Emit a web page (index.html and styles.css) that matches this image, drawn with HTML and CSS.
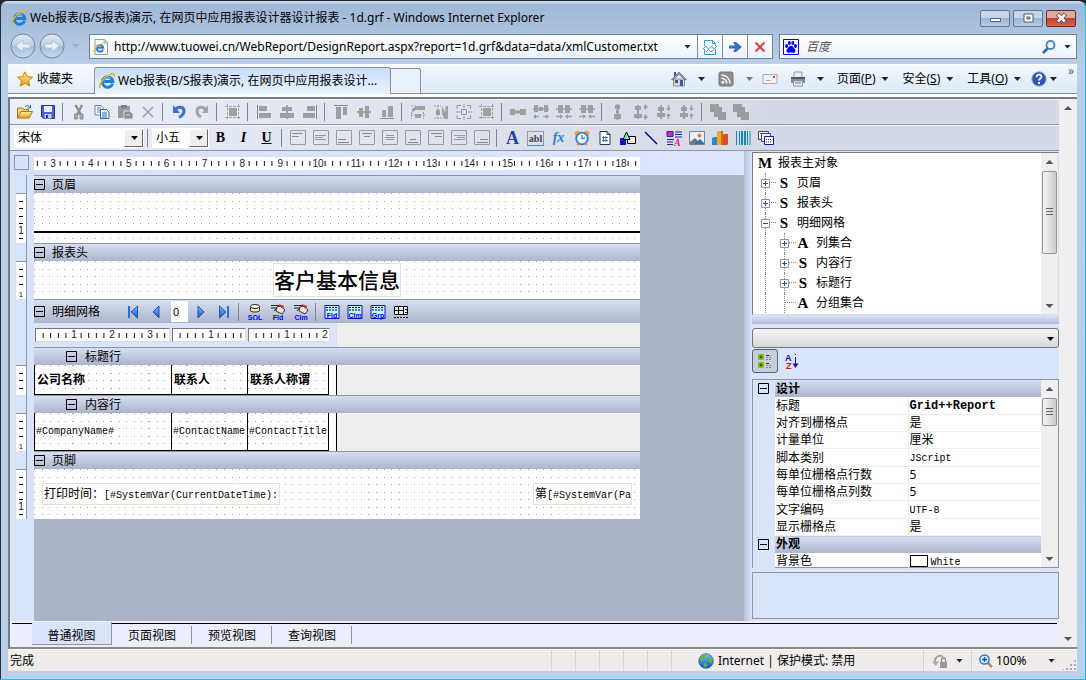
FILE: index.html
```html
<!DOCTYPE html>
<html lang="zh-CN">
<head>
<meta charset="utf-8">
<title>Web报表(B/S报表)演示</title>
<link rel="stylesheet" href="styles.css">
</head>
<body>
<svg class="defs" aria-hidden="true">
  <defs>
    <linearGradient id="gold" x2="0" y2="1"><stop stop-color="#fff3a0"/><stop offset="1" stop-color="#f09a10"/></linearGradient>
    <linearGradient id="blue" x2="0" y2="1"><stop stop-color="#7fc4f8"/><stop offset="1" stop-color="#1450c0"/></linearGradient>
    <linearGradient id="orb" x2="0" y2="1"><stop stop-color="#e2ecf5"/><stop offset=".48" stop-color="#bccfe1"/><stop offset=".5" stop-color="#a6bdd4"/><stop offset="1" stop-color="#c8dcee"/></linearGradient>
    <symbol id="ie" viewBox="0 0 16 16"><path d="M13.6 10.6A5.2 5.2 0 1 1 13.8 8.6H5.2" fill="none" stroke="#1f7fd6" stroke-width="3"/><path d="M4 7.4a4.7 4.7 0 0 1 8-2" fill="none" stroke="#7cc6f6"/><path d="M1.2 15C-1 12 5 4 11 1.400c3-1.300 5-.6 3.800 2.200" fill="none" stroke="#eeb01c" stroke-width="1.500"/></symbol>
    <symbol id="pageie" viewBox="0 0 16 16"><path d="M2 .5h9.500l3 3v12H2z" fill="#fff" stroke="#999"/><path d="M11 1v3h3.500" fill="#ddd" stroke="#aaa"/><path d="M10 10.600A3.300 3.300 0 1 1 10.200 8.800H4" fill="none" stroke="#1f7fd6" stroke-width="2"/><path d="M1 13C1 10 5 5 10 4.500" fill="none" stroke="#eeb01c" stroke-width="1.200"/></symbol>
    <symbol id="star" viewBox="0 0 16 16"><path d="M8 .8l2.200 4.800 5.300.6-3.900 3.600 1 5.200L8 12.400 3.400 15l1-5.200L.5 6.200l5.300-.6z" fill="url(#gold)" stroke="#c87f12"/></symbol>
    <symbol id="compat" viewBox="0 0 16 16"><path d="M2.500 7V1.500h8l3 3V7M2.500 10v5.500h11V10M10.500 1.500v3h3" fill="#fff" stroke="#3a9cc8"/><path d="M1 10l3-3 2.500 3 3-3 2.500 3 3-3M4 13l2.500-2.500L9 13l3-2.500" fill="none" stroke="#3a9cc8"/></symbol>
    <symbol id="go" viewBox="0 0 16 16"><path d="M2 6.500h6L6 3h3l6 5-6 5H6l2-3.500H2z" fill="#2f74bd"/></symbol>
    <symbol id="stop" viewBox="0 0 16 16"><path d="M3.500 3.500l9 9m0-9l-9 9" stroke="#d0494c" stroke-width="2.200"/></symbol>
    <symbol id="paw" viewBox="0 0 16 16"><path d="M.5.5h15v15H.5z" fill="#fff" stroke="#00f"/><g fill="#00f"><ellipse cx="3.600" cy="7" rx="1.500" ry="2"/><ellipse cx="6.300" cy="4" rx="1.500" ry="2"/><ellipse cx="9.800" cy="4" rx="1.500" ry="2"/><ellipse cx="12.500" cy="7" rx="1.500" ry="2"/><path d="M8 6.800c2 0 2.500 2 4 3.500 1.500 2-.5 4-2.200 3.500-1.200-.3-2.400-.3-3.600 0C4.500 14.300 2.500 12.300 4 10.300 5.500 8.800 6 6.800 8 6.800z"/></g></symbol>
    <symbol id="mag" viewBox="0 0 16 16"><path d="M7 9l-5 5" stroke="#2c68ae" stroke-width="2.600"/><circle cx="9.500" cy="6" r="4" fill="#fff" stroke="#3b83ca" stroke-width="1.800"/></symbol>
    <symbol id="home" viewBox="0 0 16 16"><path d="M2.500 8h11v7h-11z" fill="#d4d8dc" stroke="#8a9098"/><path d="M8 1l7.500 7.500-1.500.5-6-5.500L2 9 .5 8.500z" fill="#8c9aa8" stroke="#506070" stroke-width=".6"/><path d="M3 1h2v3L3 6z" fill="#3d4fc8"/><path d="M9 9h3v6H9z" fill="#2f62a8"/><path d="M4 9h3v3H4z" fill="#557"/></symbol>
    <symbol id="rss" viewBox="0 0 16 16"><rect x="1" y="1" width="14" height="14" rx="2" fill="#8d8d8d" stroke="#777"/><circle cx="4.800" cy="11.300" r="1.400" fill="#fff"/><path d="M3.500 7.200a5.300 5.300 0 0 1 5.300 5.300M3.500 4a8.500 8.500 0 0 1 8.500 8.500" fill="none" stroke="#fff" stroke-width="1.500"/></symbol>
    <symbol id="mail" viewBox="0 0 16 16"><path d="M1 3.500h14v9H1z" fill="#f4f4f4" stroke="#aaa"/><path d="M11 5h2v2h-2z" fill="#d33"/><path d="M4 9.500h5" stroke="#aaa"/></symbol>
    <symbol id="printer" viewBox="0 0 16 16"><path d="M4 6V1h8v5" fill="#eee" stroke="#999"/><path d="M1 6h14v6H1z" fill="#8b8f96"/><path d="M1 6h14v2H1z" fill="#55585e"/><path d="M3.500 10h9v5h-9z" fill="#e8eef4" stroke="#999"/><path d="M5 12h6" stroke="#2a8fd0"/></symbol>
    <symbol id="help" viewBox="0 0 16 16"><circle cx="8" cy="8" r="7.300" fill="#2c56b4" stroke="#aebfd8"/><path d="M5.500 6.200c0-3.400 5-3.300 5-.4C10.500 7.500 8 7.500 8 9.600" fill="none" stroke="#fff" stroke-width="1.800"/><path d="M7 11h2v2H7z" fill="#fff"/></symbol>
    <symbol id="globe" viewBox="0 0 16 16"><circle cx="8" cy="8" r="7.300" fill="url(#blue)" stroke="#2a5f9e" stroke-width=".8"/><path d="M2 5c3-4 5-4 6-3S6 5 5 7 2 9 2 5zM9 4c2-1 5 0 5.500 4-1 3-3 2-3.500 0S8 6 9 4zM6 10c3 0 4 2 2 4.500-2-.5-3-2-2-4.500z" fill="#5bb848"/></symbol>
    <symbol id="zoomin" viewBox="0 0 16 16"><path d="M9 9l5 5" stroke="#b0905e" stroke-width="2.500"/><circle cx="6.500" cy="6.500" r="4.600" fill="#dff0ff" stroke="#2d7cc8" stroke-width="1.500"/><path d="M4 6.500h5M6.500 4v5" stroke="#1456b0" stroke-width="1.500"/></symbol>
    <symbol id="protect" viewBox="0 0 16 16"><path d="M4 11A5 5 0 0 1 11 4" fill="none" stroke="#a4a4a4" stroke-width="2"/><path d="M0 9l7-1-3 5z" fill="#aaa"/><path d="M8 9h7v6H8z" fill="#999"/><path d="M9.500 9V6.500c0-2 4-2 4 0V9" fill="none" stroke="#888" stroke-width="1.300"/></symbol>

    <symbol id="open" viewBox="0 0 16 16"><path d="M.5 14V4h5l1 1.500h5V8" fill="#f5d67b" stroke="#a07820"/><path d="M.5 14L4 7.500h11.500L12 14z" fill="url(#gold)" stroke="#a07820"/><path d="M8 3c2-2 4-1.500 5 .5m.5-2.500v3h-3" fill="none" stroke="#3f5f95"/></symbol>
    <symbol id="save" viewBox="0 0 16 16"><path d="M1.500 1.500h13v13h-11l-2-2z" fill="#4e63cf" stroke="#28358e"/><path d="M4 2h8v6H4z" fill="#e7eefc"/><path d="M4.500 10h7v4.500h-7z" fill="#c6cce2"/><path d="M6 11h2v3H6z" fill="#28358e"/></symbol>
    <symbol id="cut" viewBox="0 0 16 16"><path d="M4.500 1L10 11M11 1L6 11" stroke="#909090" stroke-width="2.500"/><path d="M3.500 10h3v5h-3zM9 10h3v5H9z" fill="#aaa" stroke="#909090"/></symbol>
    <symbol id="copy" viewBox="0 0 16 16"><path d="M1 1.500h6l2 2V11H1z" fill="#fff" stroke="#5581ba"/><path d="M3 4h4M3 6h4M3 8h4" stroke="#5581ba"/><path d="M6.500 5.500h6l2.500 2.500v6.500H6.500z" fill="#eaf3ff" stroke="#326ab4"/><path d="M8 9h5M8 11h5M8 13h5" stroke="#326ab4"/></symbol>
    <symbol id="paste" viewBox="0 0 16 16"><path d="M1 2h12v12H1z" fill="#9a9a9a"/><path d="M4 1h6v3H4z" fill="#808080"/><path d="M7 7h6l3 3v5H7z" fill="#8c8c8c" stroke="#dcdfe8"/><path d="M9 11h4" stroke="#dcdfe8"/></symbol>
    <symbol id="del" viewBox="0 0 16 16"><path d="M3 3l10 10M13 3L3 13" stroke="#999" stroke-width="1.400"/></symbol>
    <symbol id="undo" viewBox="0 0 16 16"><path d="M4 6c3-4 9-3.500 9 1 0 3-2 5-5 6.500" fill="none" stroke="#3c6fc8" stroke-width="3"/><path d="M2 1v8h7z" fill="#3c6fc8"/></symbol>
    <symbol id="redo" viewBox="0 0 16 16"><path d="M12 6C9 2 3 2.500 3 7c0 3 2 5 4 6" fill="none" stroke="#a3a3a3" stroke-width="3"/><path d="M14 1v8H8z" fill="#a3a3a3"/></symbol>
    <symbol id="frame" viewBox="0 0 16 16"><path d="M4 4h8v8H4z" fill="#a0a0a0"/><path d="M2.500 0v16M13.500 0v16M0 2.500h16M0 13.500h16" stroke="#a0a0a0" stroke-dasharray="3 1"/></symbol>
    <symbol id="al" viewBox="0 0 16 16"><path d="M1.500 1v14" stroke="#888"/><path d="M3 2h8v5H3zM3 9h12v5H3z" fill="#9f9f9f"/></symbol>
    <symbol id="ac" viewBox="0 0 16 16"><path d="M8 1v14" stroke="#9f9f9f" stroke-width="2"/><path d="M3 3h10v4H3zM1 9h14v5H1z" fill="#9f9f9f"/></symbol>
    <symbol id="ar" viewBox="0 0 16 16"><path d="M14.500 1v14" stroke="#888"/><path d="M5 2h8v5H5zM1 9h12v5H1z" fill="#9f9f9f"/></symbol>
    <symbol id="at" viewBox="0 0 16 16"><path d="M1 1.500h14" stroke="#888"/><path d="M3 3h5v12H3zM10 3h4v8h-4z" fill="#9f9f9f"/></symbol>
    <symbol id="am" viewBox="0 0 16 16"><path d="M1 8h14" stroke="#9f9f9f" stroke-width="2"/><path d="M3 4h4v9H3zM9 2h4v12H9z" fill="#9f9f9f"/></symbol>
    <symbol id="ab" viewBox="0 0 16 16"><path d="M1 14.500h14" stroke="#888"/><path d="M3 6h4v7H3zM9 2h5v11H9z" fill="#9f9f9f"/></symbol>
    <symbol id="sw" viewBox="0 0 16 16"><path d="M2 5c4-4 8-3 13-3v4H6L2 8zM5 10h6v4H5z" fill="#9f9f9f"/><path d="M1.500 8v7m12-7v7M1 2h5m-5 9h14" stroke="#9f9f9f" stroke-dasharray="2 1"/></symbol>
    <symbol id="sh" viewBox="0 0 16 16"><path d="M9 2l3 6 1-6h2v13h-4L9 9zM3 6h4v5H3z" fill="#9f9f9f"/><path d="M1 2h7M1 14h8M5 1v14" stroke="#9f9f9f" stroke-dasharray="2 1"/></symbol>
    <symbol id="sb" viewBox="0 0 16 16"><path d="M5.500 5.500h5v5h-5z" fill="none" stroke="#999"/><path d="M1 5V1.500h4M11 1.500h3.500V5M14.500 11v3.500H11M5 14.500H1V11" fill="none" stroke="#999"/><path d="M8 0v4M8 12v4M0 8h4M12 8h4" stroke="#999"/></symbol>
    <symbol id="hs" viewBox="0 0 16 16"><path d="M0 5h5v6H0zM10 5h6v6h-6z" fill="#9f9f9f"/><path d="M5 8h5" stroke="#9f9f9f" stroke-width="3"/></symbol>
    <symbol id="hs2" viewBox="0 0 16 16"><path d="M1 1h4v7H1zM11 1h4v7h-4zM6 3h4v4H6z" fill="#9f9f9f"/><path d="M0 5h16M1 12.500h5m4 0h5" stroke="#9f9f9f" stroke-width="1.500"/><path d="M0 12.500L3 10v5zM16 12.500L13 10v5z" fill="#9f9f9f"/></symbol>
    <symbol id="hs3" viewBox="0 0 16 16"><path d="M2 1h5v8H2zM9 1h5v8H9z" fill="#9f9f9f"/><path d="M0 5h16M0 12.500h5m6 0h5" stroke="#9f9f9f" stroke-width="1.500"/><path d="M7 12.500L4 10v5zM9 12.500l3-2.500v5z" fill="#9f9f9f"/></symbol>
    <symbol id="vs" viewBox="0 0 16 16"><path d="M5 1h5v4H5zM4 10h7v5H4zM6 6h3v3H6z" fill="#9f9f9f"/><path d="M7.500 0v16" stroke="#9f9f9f" stroke-width="2"/></symbol>
    <symbol id="vs2" viewBox="0 0 16 16"><path d="M2 2h6v4H2zM1 10h8v4H1zM4 1h2v14H4z" fill="#9f9f9f"/><path d="M12.500 1v5m0 4v5" stroke="#9f9f9f" stroke-width="1.500"/><path d="M12.500 0L15 4h-5zM12.500 16L15 12h-5z" fill="#9f9f9f"/></symbol>
    <symbol id="vs3" viewBox="0 0 16 16"><path d="M2 3h6v4H2zM1 9h8v4H1zM4 1h2v14H4z" fill="#9f9f9f"/><path d="M12.500 1v5m0 4v5" stroke="#9f9f9f" stroke-width="1.500"/><path d="M12.500 7L15 4h-5zM12.500 9L15 12h-5z" fill="#9f9f9f"/></symbol>
    <symbol id="steps" viewBox="0 0 16 16"><path d="M0 0h9v3h3v5h4v8H8v-3H4V8H0z" fill="#9c9c9c"/></symbol>

    <symbol id="box" viewBox="0 0 16 16"><path d="M.5.5h15v14H.5z" fill="none" stroke="#9a9a9a"/></symbol>
    <symbol id="tl" viewBox="0 0 16 16"><use href="#box"/><path d="M2 3.500h11M2 6.500h7" stroke="#888"/></symbol>
    <symbol id="ml" viewBox="0 0 16 16"><use href="#box"/><path d="M2 5.500h11M2 7.500h8M2 9.500h11" stroke="#999"/></symbol>
    <symbol id="bl" viewBox="0 0 16 16"><use href="#box"/><path d="M2 9.500h8M2 12.500h11" stroke="#888"/></symbol>
    <symbol id="tc" viewBox="0 0 16 16"><use href="#box"/><path d="M3 3.500h10M5 6.500h6" stroke="#888"/></symbol>
    <symbol id="mc" viewBox="0 0 16 16"><use href="#box"/><path d="M4 5.500h8M3 7.500h10M4 9.500h8" stroke="#999"/></symbol>
    <symbol id="bc" viewBox="0 0 16 16"><use href="#box"/><path d="M5 9.500h6M3 12.500h10" stroke="#888"/></symbol>
    <symbol id="tr" viewBox="0 0 16 16"><use href="#box"/><path d="M3 3.500h11M7 6.500h7" stroke="#888"/></symbol>
    <symbol id="mr" viewBox="0 0 16 16"><use href="#box"/><path d="M3 5.500h11M6 7.500h8M3 9.500h11" stroke="#999"/></symbol>
    <symbol id="br" viewBox="0 0 16 16"><use href="#box"/><path d="M6 9.500h8M3 12.500h11" stroke="#888"/></symbol>
    <symbol id="clock" viewBox="0 0 16 16"><circle cx="3.500" cy="3.500" r="2.800" fill="#f4a51d"/><circle cx="12.500" cy="3.500" r="2.800" fill="#f4a51d"/><circle cx="8" cy="8.500" r="5.800" fill="#e9f6ff" stroke="#2a7ed0" stroke-width="1.800"/><path d="M8 5v4l3-1.500" fill="none" stroke="#2a5ea0"/><path d="M3 15l2-2m8 2l-2-2" stroke="#e08a18" stroke-width="2"/></symbol>
    <symbol id="shapes" viewBox="0 0 16 16"><path d="M7.500 6.500h8v7h-8z" fill="#eee" stroke="#000"/><path d="M0 8h6v7H0z" fill="#1a10c8"/><path d="M6.500 2L10 9.500H3z" fill="#7ee8b0" stroke="#000"/></symbol>
    <symbol id="line" viewBox="0 0 16 16"><path d="M2 2l12 12" stroke="#00008b" stroke-width="1.400"/></symbol>
    <symbol id="pic" viewBox="0 0 16 16"><path d="M.5 1.500h15v13H.5z" fill="#e7f2ff" stroke="#6f87a4"/><path d="M1 12l5-4 4 4v2H1z" fill="#777"/><path d="M5 14l6-5 4 4v1z" fill="#3472b8"/><circle cx="10.500" cy="5.500" r="2" fill="#f08030"/></symbol>
    <symbol id="chart" viewBox="0 0 16 16"><path d="M0 8l2-1h3v8H0z" fill="#2f86d0"/><path d="M5 2l2-1h4v14H5z" fill="#f2a818"/><path d="M9 1h2v14H9z" fill="#c07808"/><path d="M11 5l1-1h4v10l-1 1h-4z" fill="#e0482a"/></symbol>
    <symbol id="bars" viewBox="0 0 16 16"><path d="M1.500 1v14M4.500 1v14M12.500 1v14M15 1v14" stroke="#1689bd"/><path d="M7 1v14M10 1v14" stroke="#1689bd" stroke-width="2"/></symbol>
    <symbol id="pages" viewBox="0 0 16 16"><path d="M.5 1.500h10v8H.5z" fill="#eee" stroke="#446"/><path d="M3.500 3.500h9v8h-9z" fill="#eee" stroke="#446"/><path d="M6.500 6.500h9v8h-9z" fill="#fff" stroke="#1414b0"/><path d="M8 9.500h6M8 12h6" stroke="#1414b0" stroke-dasharray="1 1"/><path d="M2 3.500h8" stroke="#446" stroke-dasharray="1 1"/></symbol>
    <symbol id="subrep" viewBox="0 0 16 16"><path d="M1 1.500h6v5H1z" fill="#c32bd0" stroke="#402080"/><path d="M9 2h7M9 4.500h7M9 7h7M1 9.500h7M1 12h6M1 14.500h6" stroke="#2020a0"/><text x="8" y="16" font-family="Liberation Serif" font-size="10" font-style="italic" font-weight="bold" fill="#e01090">A</text></symbol>
    <symbol id="hash" viewBox="0 0 16 16"><path d="M3 1.500h7l3 3v10H3z" fill="#fff" stroke="#334"/><path d="M10 1.500v3h3" fill="none" stroke="#334"/><path d="M6.500 6v6M9 6v6M5 7.500h6M5 10.500h6" stroke="#4477bb"/></symbol>

    <symbol id="first" viewBox="0 0 16 16"><path d="M3 2h2v12H3z" fill="#2a6fd6"/><path d="M12.500 2v12L6 8z" fill="url(#blue)" stroke="#1a55b8"/></symbol>
    <symbol id="prev" viewBox="0 0 16 16"><path d="M11 2v12L5 8z" fill="url(#blue)" stroke="#1a55b8"/></symbol>
    <symbol id="next" viewBox="0 0 16 16"><path d="M5 2v12l6-6z" fill="url(#blue)" stroke="#1a55b8"/></symbol>
    <symbol id="last" viewBox="0 0 16 16"><path d="M11 2h2v12h-2z" fill="#2a6fd6"/><path d="M3.500 2v12L10 8z" fill="url(#blue)" stroke="#1a55b8"/></symbol>
    <symbol id="sql" viewBox="0 0 16 16"><path d="M3.500 2.500v4c0 2 9 2 9 0v-4" fill="#f6f090" stroke="#222"/><ellipse cx="8" cy="2.500" rx="4.500" ry="2" fill="#fff" stroke="#222"/></symbol>
    <symbol id="hand" viewBox="0 0 16 16"><path d="M1 1.500h8M1 4h7M4 7L9 2" stroke="#222"/><path d="M7 3l3-1 5 4-3 4-6-3z" fill="#f4e4dc" stroke="#333"/><path d="M9 1l5 2" stroke="#d02020" stroke-width="1.500"/></symbol>
    <symbol id="grid" viewBox="0 0 16 16"><path d="M1 1.500h14v13H1z" fill="#bff3f8" stroke="#1010c0"/><path d="M2 3.500h12M2 6h12" stroke="#000" stroke-dasharray="2 1"/></symbol>
    <symbol id="gridlast" viewBox="0 0 16 16"><path d="M1.500 2.500h13v8h-13z" fill="#e8ecf4" stroke="#000"/><path d="M2 6.500h9M5.500 3v7M10.500 3v7" stroke="#000"/><path d="M12 5.500h2M12 8.500h2M1 13.500h14" stroke="#000" stroke-dasharray="2 1"/></symbol>
    <symbol id="minus" viewBox="0 0 11 11"><path d="M.5.5h10v10H.5zM2 5.500h7" fill="none" stroke="#000"/></symbol>
    <symbol id="tplus" viewBox="0 0 9 9"><path d="M.5.5h8v8h-8z" fill="#fff" stroke="#8a96a4"/><path d="M2 4.500h5M4.500 2v5" stroke="#2f4f9c"/></symbol>
    <symbol id="tminus" viewBox="0 0 9 9"><path d="M.5.5h8v8h-8z" fill="#fff" stroke="#8a96a4"/><path d="M2 4.500h5" stroke="#2f4f9c"/></symbol>
    <symbol id="cat" viewBox="0 0 16 16"><path d="M1 1h6v6H1zM1 9h6v6H1z" fill="#8cc010"/><path d="M2.500 4h3M4 2.500v3M2.500 12h3M4 10.500v3" stroke="#222"/><path d="M9 2.500h3M9 10.500h3" stroke="#222"/><path d="M9 4.500h6M9 6.500h6M9 12.500h6M9 14.500h6M14 2v1" stroke="#888" stroke-dasharray="2 1"/></symbol>
    <symbol id="az" viewBox="0 0 16 16"><text x="1" y="8" font-family="Liberation Sans" font-size="9" font-weight="bold" fill="#1010a8">A</text><text x="2" y="16" font-family="Liberation Sans" font-size="9" font-weight="bold" fill="#d01020">Z</text><path d="M11.500 1v1m0 2v8" stroke="#1010a8"/><path d="M8.500 10.500h6l-3 4.500z" fill="#1010a8"/></symbol>
  </defs>
</svg>

<div class="window">
  <header class="titlebar">
    <svg class="i"><use href="#ie"/></svg>
    <h1 class="title">Web报表(B/S报表)演示, 在网页中应用报表设计器设计报表 - 1d.grf - Windows Internet Explorer</h1>
    <div class="winbtns">
      <button class="winbtn" aria-label="最小化"><svg class="w"><path d="M1.500 6.500h10v3h-10z" fill="#fff" stroke="#555d68"/></svg></button>
      <button class="winbtn" aria-label="还原"><svg class="w"><path d="M2 2h9v8H2z" fill="#fff" stroke="#555d68"/><path d="M5 5h3v2H5z" fill="#a9c0da" stroke="#555d68"/></svg></button>
      <button class="winbtn close" aria-label="关闭"><svg class="w"><path d="M2.500 2l8 8m0-8l-8 8" stroke="#60484c" stroke-width="4.500"/><path d="M3 2.500l7 7m0-7l-7 7" stroke="#fff" stroke-width="2.600"/></svg></button>
    </div>
  </header>

  <div class="addressrow">
    <div class="nav">
      <button class="orb" aria-label="后退"><svg class="o" viewBox="0 0 26 26"><circle cx="13" cy="13" r="12" fill="url(#orb)" stroke="#6f87a0"/><path d="M6 13l7-6v4h7v4h-7v4z" fill="#e9f2fa" stroke="#b3c6d8"/></svg></button>
      <button class="orb" aria-label="前进"><svg class="o" viewBox="0 0 26 26"><circle cx="13" cy="13" r="12" fill="url(#orb)" stroke="#6f87a0"/><path d="M20 13l-7-6v4H6v4h7v4z" fill="#e9f2fa" stroke="#b3c6d8"/></svg></button>
      <span class="arrow pale"></span>
    </div>
    <div class="address">
      <svg class="i"><use href="#pageie"/></svg>
      <input class="url" aria-label="地址" value="http://www.tuowei.cn/WebReport/DesignReport.aspx?report=1d.grf&amp;data=data/xmlCustomer.txt">
      <span class="arrow drop"></span>
      <button class="abtn" aria-label="兼容性视图"><svg class="i"><use href="#compat"/></svg></button>
      <button class="abtn" aria-label="转到"><svg class="i"><use href="#go"/></svg></button>
      <button class="abtn" aria-label="停止"><svg class="i"><use href="#stop"/></svg></button>
    </div>
    <div class="search">
      <svg class="i"><use href="#paw"/></svg>
      <input class="query" aria-label="搜索" placeholder="百度">
      <svg class="i"><use href="#mag"/></svg>
      <span class="arrow"></span>
    </div>
  </div>

  <div class="commandbar">
    <button class="fav"><svg class="i"><use href="#star"/></svg>收藏夹</button>
    <button class="tab"><svg class="i"><use href="#ie"/></svg><span>Web报表(B/S报表)演示, 在网页中应用报表设计...</span></button>
    <button class="newtab" aria-label="新选项卡"></button>
    <nav class="commands">
      <button class="cmd"><svg class="i"><use href="#home"/></svg><span class="arrow"></span></button>
      <button class="cmd"><svg class="i"><use href="#rss"/></svg><span class="arrow grey"></span></button>
      <button class="cmd"><svg class="i"><use href="#mail"/></svg></button>
      <button class="cmd"><svg class="i"><use href="#printer"/></svg><span class="arrow"></span></button>
      <button class="cmd word"><span>页面(<u>P</u>)</span><span class="arrow"></span></button>
      <button class="cmd word"><span>安全(<u>S</u>)</span><span class="arrow"></span></button>
      <button class="cmd word"><span>工具(<u>O</u>)</span><span class="arrow"></span></button>
      <button class="cmd help"><svg class="i"><use href="#help"/></svg><span class="arrow"></span></button>
      <button class="more" aria-label="更多">»</button>
    </nav>
  </div>

  <div class="viewport">
    <main class="app">
      <div class="toolbar">
        <button class="tb"><svg class="i"><use href="#open"/></svg></button><button class="tb"><svg class="i"><use href="#save"/></svg></button><i class="sep"></i>
        <button class="tb"><svg class="i"><use href="#cut"/></svg></button><button class="tb"><svg class="i"><use href="#copy"/></svg></button><button class="tb"><svg class="i"><use href="#paste"/></svg></button><button class="tb"><svg class="i"><use href="#del"/></svg></button><i class="sep"></i>
        <button class="tb"><svg class="i"><use href="#undo"/></svg></button><button class="tb"><svg class="i"><use href="#redo"/></svg></button><i class="sep"></i>
        <button class="tb"><svg class="i"><use href="#frame"/></svg></button><i class="sep"></i>
        <button class="tb"><svg class="i"><use href="#al"/></svg></button><button class="tb"><svg class="i"><use href="#ac"/></svg></button><button class="tb"><svg class="i"><use href="#ar"/></svg></button><i class="sep"></i>
        <button class="tb"><svg class="i"><use href="#at"/></svg></button><button class="tb"><svg class="i"><use href="#am"/></svg></button><button class="tb"><svg class="i"><use href="#ab"/></svg></button><i class="sep"></i>
        <button class="tb"><svg class="i"><use href="#sw"/></svg></button><button class="tb"><svg class="i"><use href="#sh"/></svg></button><button class="tb"><svg class="i"><use href="#sb"/></svg></button><button class="tb"><svg class="i"><use href="#frame"/></svg></button><i class="sep"></i>
        <button class="tb"><svg class="i"><use href="#hs"/></svg></button><button class="tb"><svg class="i"><use href="#hs2"/></svg></button><button class="tb"><svg class="i"><use href="#hs3"/></svg></button><button class="tb"><svg class="i"><use href="#hs3"/></svg></button><i class="sep"></i>
        <button class="tb"><svg class="i"><use href="#vs"/></svg></button><button class="tb"><svg class="i"><use href="#vs2"/></svg></button><button class="tb"><svg class="i"><use href="#vs3"/></svg></button><button class="tb"><svg class="i"><use href="#vs3"/></svg></button><i class="sep"></i>
        <button class="tb"><svg class="i"><use href="#steps"/></svg></button><button class="tb"><svg class="i"><use href="#steps"/></svg></button>
      </div>
      <div class="toolbar">
        <span class="combo family"><select aria-label="字体"><option>宋体</option></select></span><i class="sep"></i>
        <span class="combo size"><select aria-label="字号"><option>小五</option></select></span>
        <button class="tb letter"><b>B</b></button><button class="tb letter"><i>I</i></button><button class="tb letter"><u>U</u></button><i class="sep"></i>
        <button class="tb"><svg class="i"><use href="#tl"/></svg></button><button class="tb"><svg class="i"><use href="#ml"/></svg></button><button class="tb"><svg class="i"><use href="#bl"/></svg></button><button class="tb"><svg class="i"><use href="#tc"/></svg></button><button class="tb"><svg class="i"><use href="#mc"/></svg></button><button class="tb"><svg class="i"><use href="#bc"/></svg></button><button class="tb"><svg class="i"><use href="#tr"/></svg></button><button class="tb"><svg class="i"><use href="#mr"/></svg></button><button class="tb"><svg class="i"><use href="#br"/></svg></button><i class="sep"></i>
        <button class="tb label-a">A</button><button class="tb"><span class="abl">abl</span></button><button class="tb fx">fx</button>
        <button class="tb"><svg class="i"><use href="#clock"/></svg></button><button class="tb"><svg class="i"><use href="#hash"/></svg></button><button class="tb"><svg class="i"><use href="#shapes"/></svg></button><button class="tb"><svg class="i"><use href="#line"/></svg></button><button class="tb"><svg class="i"><use href="#subrep"/></svg></button><button class="tb"><svg class="i"><use href="#pic"/></svg></button><button class="tb"><svg class="i"><use href="#chart"/></svg></button><button class="tb"><svg class="i"><use href="#bars"/></svg></button><button class="tb"><svg class="i"><use href="#pages"/></svg></button>
      </div>

      <div class="work">
        <section class="designer">
          <div class="rulerrow">
            <span class="corner"></span>
            <div class="ruler"><span><b>3</b></span><span><b>4</b></span><span><b>5</b></span><span><b>6</b></span><span><b>7</b></span><span><b>8</b></span><span><b>9</b></span><span><b>10</b></span><span><b>11</b></span><span><b>12</b></span><span><b>13</b></span><span><b>14</b></span><span><b>15</b></span><span><b>16</b></span><span><b>17</b></span><span><b>18</b></span></div>
          </div>
          <div class="canvas">
            <div class="band">
              <div class="vruler"><span class="ticks page"><b>1</b></span></div>
              <div class="sheet">
                <div class="head"><svg class="m"><use href="#minus"/></svg>页眉</div>
                <div class="body dots page"><hr class="rule"></div>
              </div>
            </div>
            <div class="band">
              <div class="vruler"><span class="ticks"><b class="cutoff">1</b></span></div>
              <div class="sheet">
                <div class="head"><svg class="m"><use href="#minus"/></svg>报表头</div>
                <div class="body dots center"><span class="heading">客户基本信息</span></div>
              </div>
            </div>
            <div class="band">
              <div class="vruler tall"></div>
              <div class="sheet">
                <div class="head gridhead"><svg class="m"><use href="#minus"/></svg><span class="gridname">明细网格</span>
                  <button class="tb"><svg class="i"><use href="#first"/></svg></button><button class="tb"><svg class="i"><use href="#prev"/></svg></button>
                  <input class="recno" aria-label="记录号" value="0">
                  <button class="tb"><svg class="i"><use href="#next"/></svg></button><button class="tb"><svg class="i"><use href="#last"/></svg></button><i class="sep"></i>
                  <button class="tb"><svg class="i" viewBox="0 0 16 16"><use href="#sql"/><text class="tag" x="8" y="16">SQL</text></svg></button>
                  <button class="tb"><svg class="i" viewBox="0 0 16 16"><use href="#hand"/><text class="tag" x="8" y="16">Fld</text></svg></button>
                  <button class="tb"><svg class="i" viewBox="0 0 16 16"><use href="#hand"/><text class="tag" x="8" y="16">Clm</text></svg></button><i class="sep"></i>
                  <button class="tb"><svg class="i" viewBox="0 0 16 16"><use href="#grid"/><text class="tag" x="8" y="14">Fld</text></svg></button>
                  <button class="tb"><svg class="i" viewBox="0 0 16 16"><use href="#grid"/><text class="tag" x="8" y="14">Clm</text></svg></button>
                  <button class="tb"><svg class="i" viewBox="0 0 16 16"><use href="#grid"/><text class="tag" x="8" y="14">Grp</text></svg></button>
                  <button class="tb"><svg class="i"><use href="#gridlast"/></svg></button>
                </div>
                <div class="colrulers">
                  <div class="inner">
                    <div class="colruler c1"><span></span><span><b>1</b></span><span><b>2</b></span><span><b>3</b></span></div>
                    <div class="colruler c2"><span></span><span><b>1</b></span><span></span></div>
                    <div class="colruler c3"><span></span><span><b>1</b></span><span><b>2</b></span></div>
                  </div>
                </div>
              </div>
            </div>
            <div class="band">
              <div class="vruler"><span class="ticks"></span></div>
              <div class="sheet">
                <div class="head sub"><svg class="m"><use href="#minus"/></svg>标题行</div>
                <div class="gridbody">
                  <table class="detail titles dots"><tr><th class="c1">公司名称</th><th class="c2">联系人</th><th class="c3">联系人称谓</th></tr></table><span class="edge"></span>
                </div>
              </div>
            </div>
            <div class="band">
              <div class="vruler"><span class="ticks"><b class="cutoff">1</b></span></div>
              <div class="sheet">
                <div class="head sub"><svg class="m"><use href="#minus"/></svg>内容行</div>
                <div class="gridbody">
                  <table class="detail content dots"><tr><td class="c1">#CompanyName#</td><td class="c2">#ContactName</td><td class="c3">#ContactTitle</td></tr></table><span class="edge"></span>
                </div>
              </div>
            </div>
            <div class="band">
              <div class="vruler"><span class="ticks page"><b>1</b></span></div>
              <div class="sheet">
                <div class="head"><svg class="m"><use href="#minus"/></svg>页脚</div>
                <div class="body dots footer"><span class="field">打印时间：<code>[#SystemVar(CurrentDateTime):</code></span><span class="field short">第<code>[#SystemVar(Pa</code></span></div>
              </div>
            </div>
          </div>
        </section>

        <div class="splitter"></div>

        <aside class="side">
          <div class="tree">
            <ul class="nodes">
              <li class="root"><b class="kind">M</b>报表主对象</li>
              <li class="l1"><svg class="t"><use href="#tplus"/></svg><b class="kind">S</b>页眉</li>
              <li class="l1"><svg class="t"><use href="#tplus"/></svg><b class="kind">S</b>报表头</li>
              <li class="l1"><svg class="t"><use href="#tminus"/></svg><b class="kind">S</b>明细网格</li>
              <li class="l2"><svg class="t"><use href="#tplus"/></svg><b class="kind">A</b>列集合</li>
              <li class="l2"><svg class="t"><use href="#tplus"/></svg><b class="kind">S</b>内容行</li>
              <li class="l2"><svg class="t"><use href="#tplus"/></svg><b class="kind">S</b>标题行</li>
              <li class="l2"><span class="t"></span><b class="kind">A</b>分组集合</li>
            </ul>
            <div class="scroll"><span class="up"></span><span class="thumb long"></span><span class="down"></span></div>
          </div>
          <div class="hsplit"></div>
          <span class="combo wide"><select aria-label="对象"><option></option></select></span>
          <div class="sorts">
            <button class="sort on" aria-label="按分类"><svg class="i"><use href="#cat"/></svg></button>
            <button class="sort" aria-label="按字母"><svg class="i"><use href="#az"/></svg></button>
          </div>
          <div class="props">
            <table class="ptable">
              <tr class="group"><td class="gut"><svg class="m"><use href="#minus"/></svg></td><th colspan="2">设计</th></tr>
              <tr><td class="gut"></td><td class="name">标题</td><td><code><b>Grid++Report</b></code></td></tr>
              <tr><td class="gut"></td><td class="name">对齐到栅格点</td><td>是</td></tr>
              <tr><td class="gut"></td><td class="name">计量单位</td><td>厘米</td></tr>
              <tr><td class="gut"></td><td class="name">脚本类别</td><td><code>JScript</code></td></tr>
              <tr><td class="gut"></td><td class="name">每单位栅格点行数</td><td>5</td></tr>
              <tr><td class="gut"></td><td class="name">每单位栅格点列数</td><td>5</td></tr>
              <tr><td class="gut"></td><td class="name">文字编码</td><td><code>UTF-8</code></td></tr>
              <tr><td class="gut"></td><td class="name">显示栅格点</td><td>是</td></tr>
              <tr class="group"><td class="gut"><svg class="m"><use href="#minus"/></svg></td><th colspan="2">外观</th></tr>
              <tr><td class="gut"></td><td class="name">背景色</td><td><span class="swatch"></span><code>White</code></td></tr>
            </table>
            <div class="scroll"><span class="up"></span><span class="thumb"></span><span class="down"></span></div>
          </div>
          <div class="hint"></div>
        </aside>
      </div>

      <div class="views">
        <span class="lead"></span>
        <button class="view active">普通视图</button>
        <button class="view">页面视图</button>
        <button class="view">预览视图</button>
        <button class="view">查询视图</button>
        <span class="tail"></span>
      </div>
    </main>
    <div class="scroll pagescroll"><span class="up"></span><span class="down"></span></div>
  </div>

  <footer class="status">
    <span class="done">完成</span>
    <span class="cells"><i></i><i></i><i></i><i></i><i></i><i></i></span>
    <span class="zone"><svg class="i"><use href="#globe"/></svg>Internet | 保护模式: 禁用</span>
    <button class="prot" aria-label="保护"><svg class="i"><use href="#protect"/></svg><span class="arrow"></span></button>
    <button class="zoom"><svg class="i"><use href="#zoomin"/></svg><span class="pct">100%</span><span class="arrow"></span></button>
    <span class="grip"></span>
  </footer>
</div>
</body>
</html>
```
FILE: styles.css
```css
* { box-sizing: border-box; }
html, body { height: 100%; margin: 0; }
body {
  background: #20242c;
  color: #000;
  font: 12px/16px "Noto Sans", "Noto Sans CJK SC", sans-serif;
  overflow: hidden;
}
button {
  margin: 0; padding: 0; border: 0; background: none;
  color: inherit; font: inherit;
  display: flex; align-items: center; justify-content: center; flex: none;
}
input, select { font: inherit; color: inherit; border: 0; padding: 0; margin: 0; min-width: 0; outline: 0; }
.defs { position: absolute; width: 0; height: 0; }
.i { width: 16px; height: 16px; flex: none; display: block; }
.arrow {
  width: 7px; height: 4px; flex: none;
  background: #1c2430; clip-path: polygon(0 0, 100% 0, 50% 100%);
}
.arrow.pale { background: #9db3ca; }
.arrow.grey { background: #707a86; }

/* window frame */
.window {
  height: 100%; display: flex; flex-direction: column;
  padding: 0 8px 8px 7px; border: 1px solid #23303c; border-top-color: #20242c;
  border-right-color: #17c3de; border-bottom-color: #17c3de;
  border-radius: 7px 7px 0 0;
  background: linear-gradient(#d3e2f2 0, #9fb8d6 4px, #b8cde6 60px, #b9d0ea 100%);
}
.titlebar { display: flex; align-items: center; height: 32px; flex: none; padding: 2px 1px 0 3px; gap: 3px; }
.title { flex: 1; margin: 0; font-size: 12px; font-weight: 400; line-height: 18px; white-space: nowrap; overflow: hidden; }
.winbtns { display: flex; gap: 3px; }
.winbtn {
  width: 30px; height: 17px; border: 1px solid #5f738c; border-radius: 2px;
  background: linear-gradient(#c6d6e9 45%, #9fb6d0 50%, #b8cce2);
}
.winbtn.close { background: linear-gradient(#e2a9a0 45%, #c4432c 50%, #d3674c); border-color: #6d2a2a; }
.w { width: 13px; height: 12px; }

/* address row */
.addressrow { display: flex; align-items: flex-start; height: 31px; flex: none; gap: 6px; }
.nav { display: flex; align-items: center; gap: 3px; width: 75px; height: 26px; padding-left: 2px; }
.orb, .o { width: 26px; height: 26px; }
.nav .arrow { margin-left: 4px; }
.address, .search {
  display: flex; align-items: center; height: 25px; margin-top: 1px;
  border: 1px solid #6e8299; background: linear-gradient(#fff, #eaf2fb);
}
.address { flex: 1; padding-left: 3px; gap: 5px; }
.search { width: 298px; padding: 0 5px 0 3px; gap: 7px; }
.url { flex: 1; background: none; height: 20px; }
.drop { margin-right: 1px; }
.abtn { width: 25px; height: 23px; border-left: 1px solid #7d90a6; }
.abtn + .abtn { margin-left: -5px; }
.query { flex: 1; background: none; font-style: italic; height: 20px; }
.query::placeholder { color: #555; opacity: 1; }

/* command bar */
.commandbar {
  display: flex; align-items: stretch; height: 33px; flex: none; padding-bottom: 3px;
  background: linear-gradient(#fff 0 1px, #f2f8fe 1px, #dce9f7 29px, #8a9099 29px 30px, #fff 30px);
}
.fav { width: 86px; gap: 4px; padding-right: 12px; background: linear-gradient(#f8fbfe, #e4eef9 28px, transparent 29px); }
.tab {
  width: 297px; margin-top: 3px; padding: 0 4px; gap: 3px; justify-content: flex-start;
  border: 1px solid #8a9099; border-bottom: 0; border-radius: 3px 3px 0 0;
  background: linear-gradient(#c9defa, #e8f2fe); white-space: nowrap; overflow: hidden;
}
.newtab { width: 30px; margin-top: 4px; border: 1px solid #8a9099; border-left: 0; border-radius: 0 3px 0 0; background: #e9f2fb; }
.commands { margin-left: auto; display: flex; align-items: center; padding-right: 3px; }
.cmd { gap: 11px; margin-right: 13px; }
.cmd:nth-child(2) { margin-right: 9px; gap: 12px; }
.cmd:nth-child(3) { margin-right: 12px; }
.cmd:nth-child(4) { margin-right: 13px; }
.cmd.word { gap: 6px; margin-right: 14px; }
.cmd.help { gap: 3px; margin-right: 11px; }
.cmd:nth-child(7) { margin-right: 10px; }
.more { color: #4a5fa8; align-self: flex-start; height: 14px; }

/* page viewport */
.viewport { flex: 1; display: flex; min-height: 0; border: 1px solid #777; border-width: 2px 0 2px 2px; border-color: #777a80 #fff #8b8b80 #777a80; }
.app { flex: 1; display: flex; flex-direction: column; min-width: 0; background: #d9e3fa; }
.toolbar {
  display: flex; align-items: center; height: 26px; flex: none; padding-left: 3px;
  background: linear-gradient(90deg, #eaeef8, #d5d9e5 75%);
  border-bottom: 1px solid #9096a2; border-top: 1px solid #f4f6fb;
}
.toolbar + .toolbar { padding-left: 4px; }
.tb { width: 23px; height: 22px; }
.sep { width: 8px; height: 18px; flex: none; background: linear-gradient(90deg, transparent 3px, #7f838c 3px 4px, transparent 4px); }
.letter { font: bold 14px/16px "Liberation Serif", serif; }
.label-a { font: bold 18px/22px "Liberation Serif", serif; color: #2744a4; }
.abl { font: bold 10px/11px "Liberation Serif", serif; border: 1px solid #999; border-bottom-color: #4b85d0; padding: 1px; color: #3a4660; }
.fx { font: italic bold 14px/16px "Liberation Serif", serif; color: #1e86cf; }
.combo { position: relative; display: block; background: #fff; height: 20px; }
.combo select { appearance: none; background: transparent; width: 100%; height: 100%; padding-left: 4px; display: block; }
.combo::after {
  content: ""; position: absolute; right: 1px; top: 1px; bottom: 1px; width: 17px; pointer-events: none;
  background: #eee; border: 1px solid; border-color: #fff #666 #666 #fff;
}
.combo::before {
  content: ""; position: absolute; right: 6px; top: 8px; width: 7px; height: 4px; z-index: 1; pointer-events: none;
  background: #000; clip-path: polygon(0 0, 100% 0, 50% 100%);
}
.family { width: 130px; }
.size { width: 57px; }

.work { flex: 1; display: flex; min-height: 0; }
.designer { flex: 1; display: flex; flex-direction: column; min-width: 0; background: linear-gradient(90deg, #d6e0f8, #dce5fc); }
.rulerrow { display: flex; height: 24px; flex: none; padding-left: 4px; }
.corner { width: 15px; height: 15px; margin: 4px 5px 0 0; border: 1px solid #8f94a4; }
.ruler { display: flex; width: 606px; height: 13px; margin-top: 6px; background: #fff; }
.ruler span, .colruler span {
  flex: 1; display: flex; justify-content: center; align-items: center;
  background: linear-gradient(90deg, transparent 3px, #000 3px 4px, transparent 4px) 0 center / 20% 5px repeat-x;
}
.ruler b, .colruler b, .ticks b { font: 10px/12px "Liberation Sans", sans-serif; background: #fff; color: #222; }
.ruler b, .colruler b { min-width: 8px; text-align: center; }

.canvas { flex: 1; min-height: 0; overflow: hidden; background: linear-gradient(90deg, #d9e3fa 24px, #adb3c7 24px); }
.band { display: flex; }
.vruler { width: 11px; margin: 0 7px 0 6px; flex: none; border-right: 1px solid #8f94a4; padding-top: 18px; display: flex; }
.ticks {
  flex: 1; border-top: 1px solid #8f94a4; display: flex; flex-direction: column; align-items: center; overflow: hidden;
  background: linear-gradient(transparent 7px, #000 7px 8px, transparent 8px 14px, #000 14px 15px) center 0 / 4px 15px repeat-y, #fff;
}
.ticks b { margin-top: 31px; padding: 0 2px; }
.ticks b.cutoff { margin-top: 29px; font-size: 8px; line-height: 8px; }
.sheet { width: 606px; flex: none; }
.head {
  display: flex; align-items: center; height: 18px; gap: 7px;
  border-top: 1px solid #8f94a4; background: linear-gradient(#d7dff2, #acb4ca);
}
.head.sub { padding-left: 32px; gap: 8px; }
.m { width: 11px; height: 11px; flex: none; display: block; }
.body { height: 38px; display: flex; }
.body.page { height: 50px; flex-direction: column; }
.dots {
  background-color: #fff;
  background-image: url("data:image/svg+xml,%3Csvg xmlns='http://www.w3.org/2000/svg' width='38' height='15'%3E%3Cpath d='M0 8.500h1m7 0h1m6 0h1m7 0h1m6 0h1M0 .5h1m7 0h1m6 0h1m7 0h1m6 0h1' stroke='%23aaa'/%3E%3C/svg%3E");
}
.rule { width: 100%; margin: 38px 0 0; border: 0; border-top: 2px solid #000; }
.center { justify-content: center; align-items: center; }
.field { border: 1px solid #e4e2d4; background: #ffffffcc; padding: 0 1px; white-space: nowrap; overflow: hidden; height: 22px; line-height: 20px; }
.heading { padding: 0; border: 1px solid #e4e2d4; background: #ffffffcc; font-size: 21px; line-height: 32px; font-weight: 500; white-space: nowrap; }
.footer { height: 50px; padding: 14px 8px 0; justify-content: space-between; }
.short { width: 99px; }
code { font: 10px/16px "Liberation Mono", monospace; }
.gridhead { height: 24px; gap: 0; }
.gridname { width: 76px; padding-left: 7px; }
.recno { width: 17px; height: 21px; margin: 0 1px 0 4px; padding-left: 2px; background: #fff; font: 11px/18px "Liberation Sans", sans-serif; }
.tag { font: bold 7px "Liberation Sans", sans-serif; fill: #0000f0; text-anchor: middle; }
.colrulers { background: #efefef; height: 24px; display: flex; }
.inner { display: flex; width: 303px; gap: 2px; padding: 5px 0 0 1px; background: #d9e3fa; }
.colruler { display: flex; height: 14px; overflow: hidden; background: #fff; border: 1px solid #777; border-right-color: #ddd; border-bottom-color: #ddd; }
.colruler span { flex: 0 0 38px; }
.colruler span:first-child { margin-left: -19px; }
.colruler.c1 { width: 135px; }
.colruler.c2 { width: 74px; }
.colruler.c3 { width: 82px; }
.gridbody { display: flex; background: #efefef; }
.detail { border-collapse: collapse; table-layout: fixed; width: 295px; height: 30px; }
.detail.content { height: 38px; }
.detail th, .detail td { border: 1px solid #000; border-top: 0; padding: 0 0 0 2px; text-align: left; white-space: nowrap; overflow: hidden; }
.detail td { font: 10px/12px "Liberation Mono", monospace; padding-left: 1px; }
.detail .c1 { width: 137px; }
.detail .c2 { width: 76px; }
.edge { width: 8px; background: #fff; border-right: 1px solid #000; }

.splitter { width: 8px; flex: none; background: linear-gradient(90deg, #b8c1da, #d9e3fa); }

/* side panel */
.side { width: 307px; flex: none; display: flex; flex-direction: column; padding-top: 1px; background: #d9e3fa; }
.tree { display: flex; height: 163px; flex: none; background: #fff; border: 1px solid #777c88; border-right-color: #ddd; border-bottom-color: #ddd; }
.nodes { flex: 1; list-style: none; margin: 0; padding: 0; overflow: hidden; }
.nodes li { display: flex; align-items: center; height: 20px; position: relative; }
.nodes .root { padding-left: 4px; }
.l1 { padding-left: 8px; }
.l2 { padding-left: 27px; }
.t { width: 9px; height: 9px; flex: none; z-index: 1; }
.kind { width: 16px; margin: 0 5px 0 6px; text-align: center; font: bold 15px/16px "Liberation Serif", serif; }
.root .kind { margin: 0 5px 0 0; }
.l1::before, .l2::before { content: ""; position: absolute; left: 12px; top: 0; bottom: 0; border-left: 1px dotted #888; }
.l2::after { content: ""; position: absolute; left: 31px; top: 0; bottom: 0; width: 12px; border-left: 1px dotted #888; background: linear-gradient(90deg, #888 1px, transparent 1px) 0 9px / 2px 1px repeat-x; }
.l1::after { content: ""; position: absolute; left: 18px; top: 9px; width: 5px; border-top: 1px dotted #888; }
.scroll { width: 17px; flex: none; display: flex; flex-direction: column; align-items: center; background: #efefef; padding: 7px 0 6px; }
.scroll .up, .scroll .down { width: 8px; height: 4px; background: #555; clip-path: polygon(50% 0, 100% 100%, 0 100%); flex: none; }
.scroll .down { clip-path: polygon(0 0, 100% 0, 50% 100%); margin-top: auto; }
.thumb { width: 15px; height: 28px; margin-top: 7px; border: 1px solid #8f959d; border-radius: 2px; background: repeating-linear-gradient(#666 0 1px, transparent 1px 3px) center / 7px 9px no-repeat, linear-gradient(90deg, #f4f4f4, #ccc); }
.thumb.long { height: 83px; }
.hsplit { height: 8px; flex: none; margin: 1px 0 4px; background: linear-gradient(#d7dff2, #b4bdd6); }
.wide { height: 20px; flex: none; border: 1px solid #70747c; border-radius: 3px; background: linear-gradient(#f4f4f4, #d8d8d8); }
.wide::after { display: none; }
.wide::before { right: 4px; }
.sorts { display: flex; height: 31px; flex: none; padding-top: 1px; gap: 1px; }
.sort { width: 26px; height: 24px; }
.sort.on { border: 1px solid #5a6068; border-radius: 3px; background: #c6cddd; }
.props { display: flex; height: 189px; flex: none; border: 1px solid #8f94a4; background: #fff; }
.ptable { flex: 1; border-collapse: collapse; table-layout: fixed; }
.ptable td, .ptable th { height: 17px; padding: 0 1px; line-height: 16px; border-bottom: 1px solid #eee; border-left: 1px solid #eee; text-align: left; font-size: 12px; }
.ptable .gut { width: 22px; background: #d9e3fa; border: 0; padding-left: 5px; }
.ptable .name { width: 133px; border-left: 0; }
.ptable th { background: linear-gradient(#d7dff2, #acb4ca); border: 0; }
.ptable code { font-size: 10px; line-height: 14px; }
.ptable code b { font-size: 12px; line-height: 14px; }
.swatch { display: inline-block; width: 18px; height: 12px; margin-right: 3px; border: 1px solid #000; vertical-align: -2px; }
.hint { flex: 1; margin: 4px 0 2px; border: 1px solid #8f94a4; }

/* view tabs */
.views { display: flex; height: 26px; flex: none; padding: 0 2px; background: #eceffb; border-top: 1px solid #eef2fd; }
.lead { width: 20px; border-top: 1px solid #000; margin-top: 1px; }
.tail { flex: 1; border-top: 1px solid #000; margin-top: 1px; }
.view { width: 80px; height: 23px; margin-top: 1px; padding-top: 2px; border-top: 1px solid #000; background: linear-gradient(#8f94a4, #8f94a4) right 2px / 1px 18px no-repeat; }
.view.active { border: 1px solid #8f94a4; border-width: 0 1px 1px 0; background: #d9e3fa; margin-top: 0; padding-top: 5px; }
.pagescroll { width: 18px; }

/* status bar */
.status { display: flex; align-items: center; height: 22px; flex: none; background: #f0eceb; border-top: 1px solid #fff; white-space: nowrap; }
.done { flex: 1; padding-left: 2px; }
.cells { display: flex; align-self: stretch; padding-right: 26px; }
.cells i { width: 24px; border-left: 1px solid #d6d2d0; }
.cells i:last-child { width: 1px; }
.zone { display: flex; align-items: center; gap: 4px; width: 225px; }
.prot { width: 48px; gap: 8px; align-self: stretch; border-left: 1px solid #d6d2d0; }
.zoom { width: 90px; gap: 2px; align-self: stretch; border-left: 1px solid #d6d2d0; }
.pct { width: 50px; text-align: left; }
.grip { width: 16px; height: 12px; align-self: flex-end; background: radial-gradient(#aaa 1px, transparent 1px) 0 0 / 4px 4px; clip-path: polygon(100% 0, 100% 100%, 0 100%); }
```
